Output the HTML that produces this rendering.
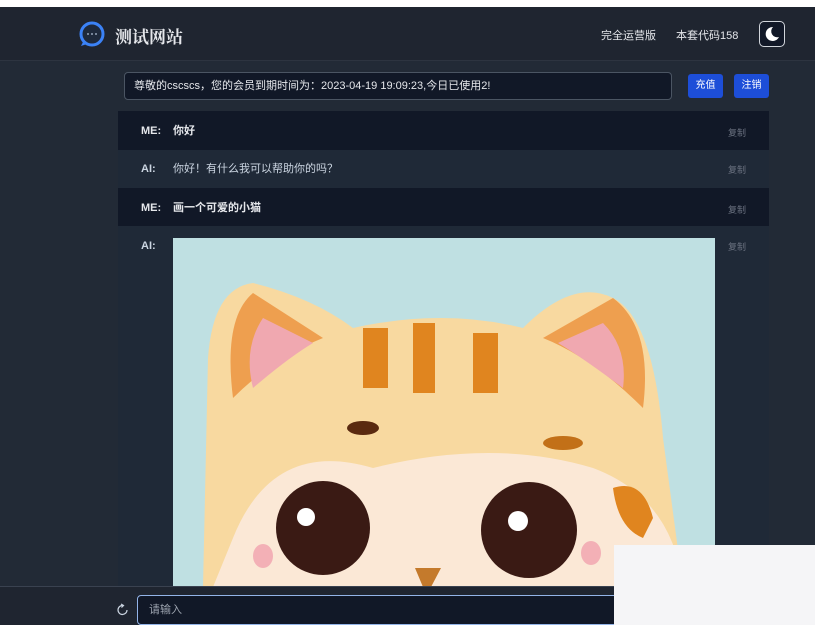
<!DOCTYPE html>
<html><head><meta charset="utf-8"><style>
*{margin:0;padding:0;box-sizing:border-box}
body{width:815px;height:625px;overflow:hidden;background:#222a36;font-family:"Liberation Sans","Noto Sans CJK SC",sans-serif;position:relative;color:#e5e7eb}
.abs{position:absolute}
.t{line-height:14px;height:14px}
</style></head><body>
<div class="abs" style="left:0;top:0;width:815px;height:7px;background:#fff"></div>
<div class="abs" style="left:0;top:7px;width:815px;height:54px;background:#1f2530;border-bottom:1px solid #2d3440"></div>
<svg class="abs" style="left:78px;top:20px" width="28" height="28" viewBox="0 0 28 28"><circle cx="14" cy="14" r="11" fill="#1e293b" stroke="#3b82f6" stroke-width="3"/><path d="M5 22 L3 26 L9 24" fill="#3b82f6"/><circle cx="10" cy="14" r="1" fill="#94a3b8"/><circle cx="14" cy="14" r="1" fill="#94a3b8"/><circle cx="18" cy="14" r="1" fill="#94a3b8"/></svg>
<div class="abs" style="left:115px;top:23px;font-size:17px;font-weight:bold;color:#e5e7eb;font-family:'Noto Serif CJK SC',serif">测试网站</div>
<div class="abs" style="left:601px;top:27px;font-size:11px;color:#e5e7eb">完全运营版</div>
<div class="abs" style="left:676px;top:27px;font-size:11px;color:#e5e7eb">本套代码158</div>
<div class="abs" style="left:759px;top:21px;width:26px;height:26px;border:1px solid #d1d5db;border-radius:5px;background:#111827"><svg width="24" height="24" viewBox="0 0 24 24"><path d="M13 5 A7 7 0 1 0 19 15 A6 6 0 0 1 13 5Z" fill="#fff"/></svg></div>
<div class="abs" style="left:124px;top:72px;width:548px;height:28px;border:1px solid #4b5563;border-radius:4px;background:#111827;font-size:11px;line-height:26px;padding-left:9px;color:#e5e7eb">尊敬的cscscs，您的会员到期时间为：2023-04-19 19:09:23,今日已使用2!</div>
<div class="abs" style="left:688px;top:74px;width:35px;height:24px;background:#1d4ed8;border-radius:3px;font-size:10px;line-height:24px;text-align:center;color:#fff">充值</div>
<div class="abs" style="left:734px;top:74px;width:35px;height:24px;background:#1d4ed8;border-radius:3px;font-size:10px;line-height:24px;text-align:center;color:#fff">注销</div>
<div class="abs" style="left:118px;top:111px;width:651px;height:476px;background:#1f2937"></div>
<div class="abs" style="left:118px;top:111px;width:651px;height:39px;background:#111827"></div>
<div class="abs" style="left:118px;top:188px;width:651px;height:38px;background:#111827"></div>
<div class="abs t" style="left:141px;top:124px;font-size:11px;font-weight:bold">ME:</div><div class="abs t" style="left:173px;top:124px;font-size:11px;font-weight:bold">你好</div>
<div class="abs t" style="left:141px;top:162px;font-size:11px;font-weight:bold;color:#cbd5e1">AI:</div><div class="abs t" style="left:173px;top:162px;font-size:11px;color:#cbd5e1">你好！有什么我可以帮助你的吗？</div>
<div class="abs t" style="left:141px;top:201px;font-size:11px;font-weight:bold">ME:</div><div class="abs t" style="left:173px;top:201px;font-size:11px;font-weight:bold">画一个可爱的小猫</div>
<div class="abs t" style="left:141px;top:239px;font-size:11px;font-weight:bold;color:#cbd5e1">AI:</div>
<div class="abs" style="left:728px;top:126px;font-size:9px;color:#6b7280">复制</div>
<div class="abs" style="left:728px;top:163px;font-size:9px;color:#6b7280">复制</div>
<div class="abs" style="left:728px;top:203px;font-size:9px;color:#6b7280">复制</div>
<div class="abs" style="left:728px;top:240px;font-size:9px;color:#6b7280">复制</div>
<svg class="abs" style="left:173px;top:238px" width="542" height="349" viewBox="0 0 542 349">
<rect width="542" height="349" fill="#bfe0e2"/>
<path d="M30 349 L35 120 Q40 50 80 45 Q140 60 180 90 Q270 70 350 90 Q400 40 440 60 Q480 80 490 200 L510 349Z" fill="#f8d9a0"/>
<path d="M80 55 Q50 80 60 160 Q100 120 150 100Z" fill="#ee9f4f"/>
<path d="M440 60 Q480 90 470 170 Q420 120 370 100Z" fill="#ee9f4f"/>
<path d="M90 80 Q70 110 80 150 Q115 120 140 105Z" fill="#f0a8b0"/>
<path d="M430 85 Q455 110 450 150 Q410 120 385 105Z" fill="#f0a8b0"/>
<rect x="190" y="90" width="25" height="60" fill="#e0851f"/><rect x="240" y="85" width="22" height="70" fill="#e0851f"/><rect x="300" y="95" width="25" height="60" fill="#e0851f"/>
<ellipse cx="190" cy="190" rx="16" ry="7" fill="#5a2a10"/><ellipse cx="390" cy="205" rx="20" ry="7" fill="#c27018"/>
<path d="M60 300 Q100 200 200 230 Q320 200 420 230 Q500 260 510 349 L40 349Z" fill="#fbe8d6"/>
<circle cx="150" cy="290" r="47" fill="#3a1a14"/><circle cx="356" cy="292" r="48" fill="#3a1a14"/>
<circle cx="133" cy="279" r="9" fill="#fff"/><circle cx="345" cy="283" r="10" fill="#fff"/>
<ellipse cx="90" cy="318" rx="10" ry="12" fill="#f3b0b6"/><ellipse cx="418" cy="315" rx="10" ry="12" fill="#f3b0b6"/>
<path d="M440 250 Q470 240 480 280 L470 300 Q445 290 440 250Z" fill="#e0851f"/>
<path d="M242 330 L268 330 L258 349 L250 349Z" fill="#c47a2c"/>
</svg>
<div class="abs" style="left:0;top:586px;width:815px;height:39px;background:#1f2530;border-top:1px solid #3a4250"></div>
<svg class="abs" style="left:116px;top:603px" width="14" height="14" viewBox="0 0 14 14"><path d="M11 7 A4.5 4.5 0 1 1 7 2.5" stroke="#cbd5e1" stroke-width="1.2" fill="none"/><path d="M5 1 L7.5 2.5 L5.5 4.5" stroke="#cbd5e1" stroke-width="1.2" fill="none"/></svg>
<div class="abs" style="left:137px;top:595px;width:520px;height:30px;border:1px solid #93b4e8;border-radius:4px;background:#111827;font-size:11px;line-height:28px;padding-left:11px;color:#9ca3af">请输入</div>
<div class="abs" style="left:614px;top:545px;width:201px;height:80px;background:#f5f5f7"></div>
</body></html>
